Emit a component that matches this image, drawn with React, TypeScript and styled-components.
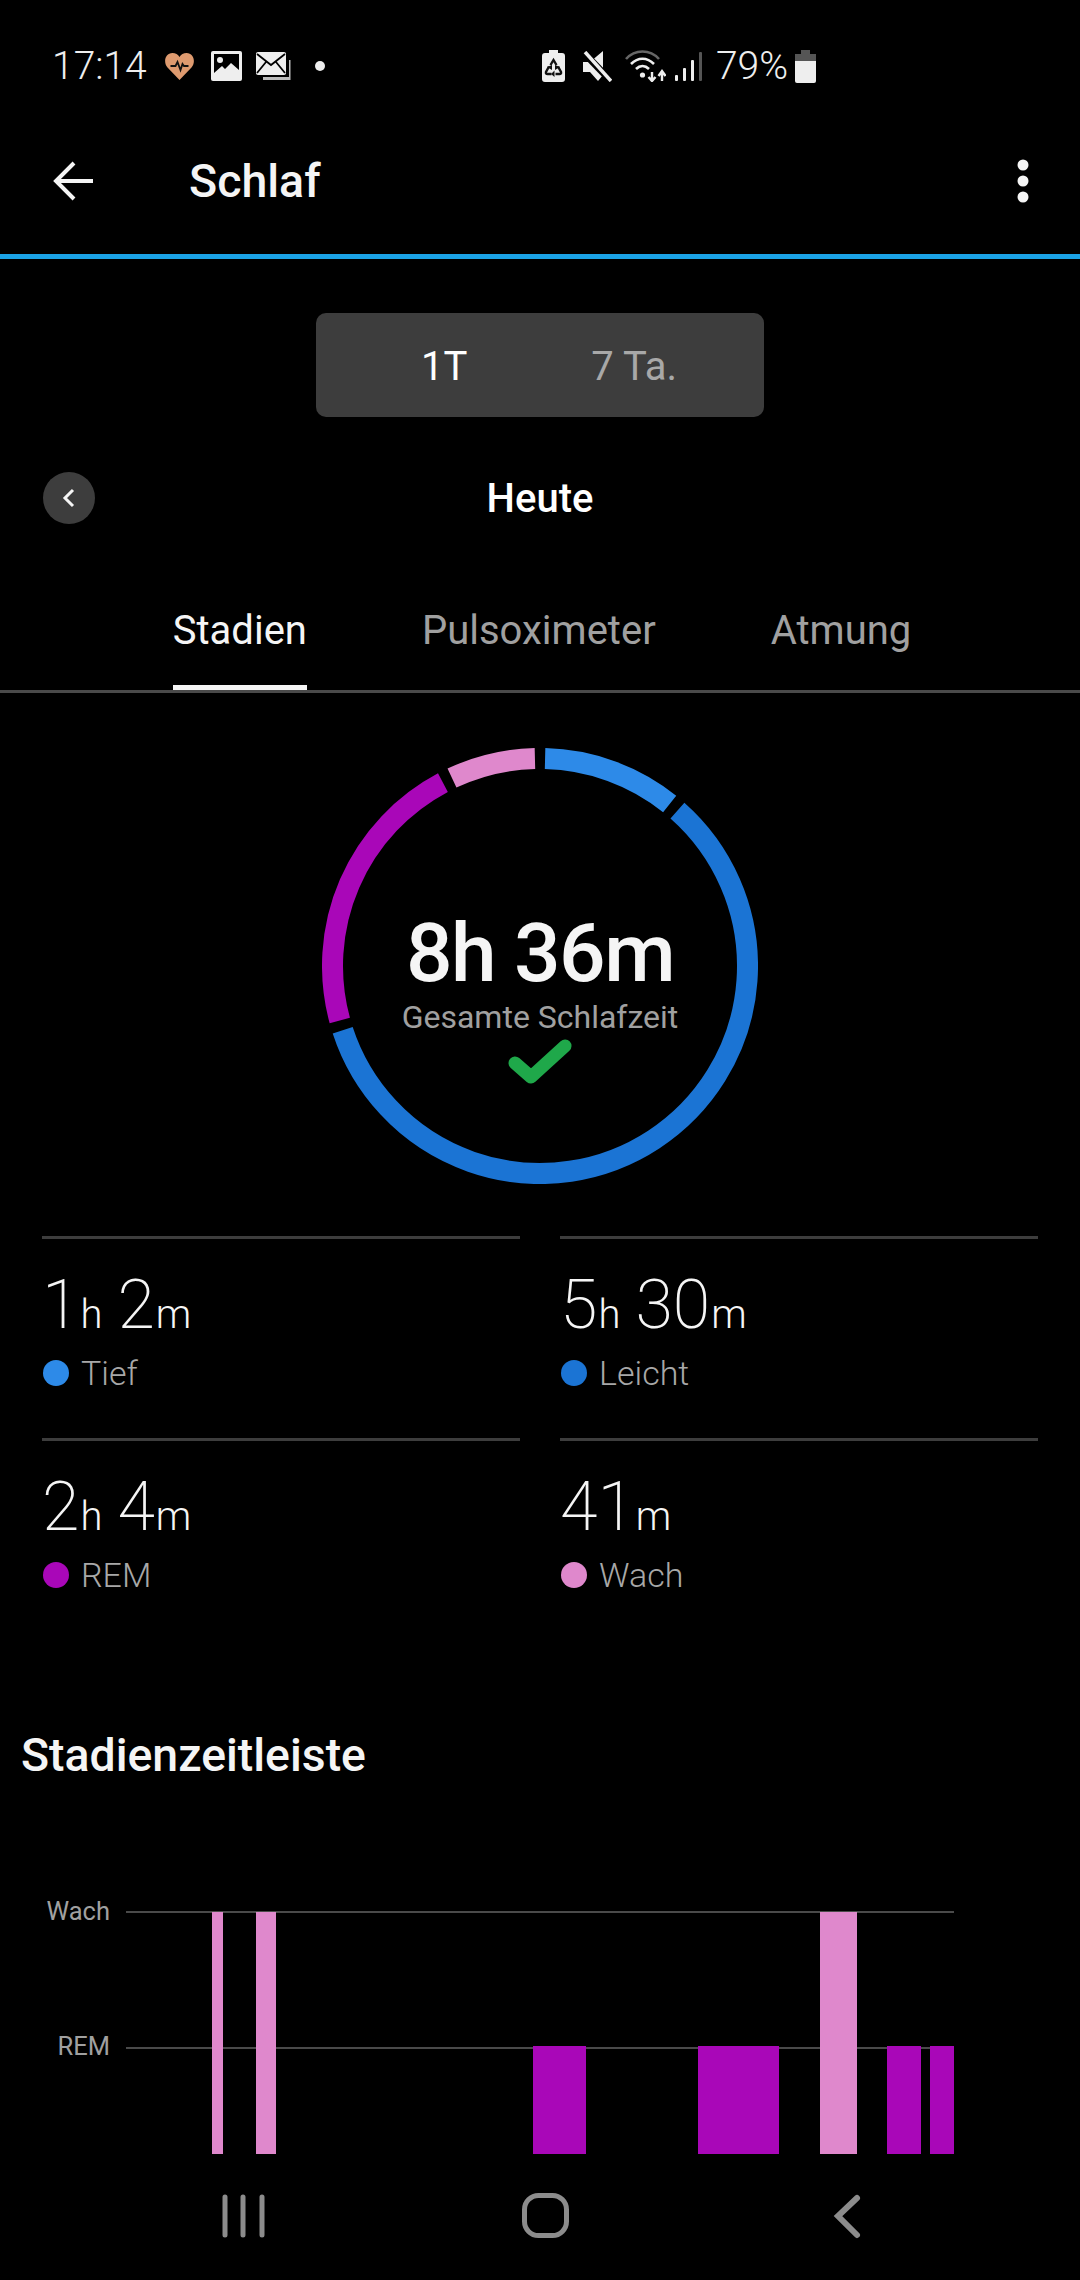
import * as React from "react";
import styled, { createGlobalStyle } from "styled-components";

const GlobalStyle = createGlobalStyle`
    html, body {
        margin: 0;
        padding: 0;
        background: #000;
    }
    * {
        box-sizing: border-box;
    }
`;

const Screen = styled.div`
    width: 1080px;
    height: 2280px;
    background: #000;
    color: #f5f5f5;
    font-family: Roboto, "Liberation Sans", sans-serif;
    display: flex;
    flex-direction: column;
    overflow: hidden;
`;

// Status bar
const StatusBar = styled.div`
    height: 90px;
    flex: none;
    padding: 44px 264px 0 52px;
    display: flex;
    justify-content: space-between;
    align-items: flex-start;
`;

const StatusGroup = styled.div`
    display: flex;
    align-items: center;
    height: 44px;
`;

const StatusText = styled.span<{ $left: number }>`
    font-size: 39px;
    font-weight: 300;
    line-height: 44px;
    color: #eee;
    margin-left: ${(p) => p.$left}px;
`;

const StatusIcon = styled.svg<{ $left: number }>`
    display: block;
    flex: none;
    margin-left: ${(p) => p.$left}px;
`;

function StatusLeft(): JSX.Element {
    return (
        <StatusGroup>
            <StatusText $left={0}>17:14</StatusText>
            <StatusIcon $left={17} width="31" height="28" viewBox="0 0 30 28">
                <path
                    d="M15 28 L3 15.500 C-1.500 10.500 0.500 1 8 1 C11 1 13.500 2.500 15 5 C16.500 2.500 19 1 22 1 C29.500 1 31.500 10.500 27 15.500 Z"
                    fill="#de9a6f"
                />
                <path d="M6 14 H11 L13 10 L16 18 L18 12 L19.500 14 H24" fill="none" stroke="#111" strokeWidth="1.800" />
            </StatusIcon>
            <StatusIcon $left={16} width="31" height="30" viewBox="0 0 31 30">
                <rect width="31" height="30" rx="2" fill="#eee" />
                <rect x="3" y="3" width="25" height="20" fill="#000" />
                <circle cx="9" cy="9" r="3" fill="#eee" />
                <path d="M3 24 L3 22 L11 15 L14 18 L20 12 L28 19 L28 24 Z" fill="#eee" />
            </StatusIcon>
            <StatusIcon $left={14} width="35" height="30" viewBox="0 0 35 30">
                <path d="M33 9 H34.500 V29 H7 V26 H33 Z" fill="#bbb" />
                <rect x="0" y="1" width="30" height="23" rx="2" fill="#eee" />
                <path d="M1 3 L15 14 L29 3 M1 22 L10 11 M29 22 L20 11" fill="none" stroke="#000" strokeWidth="1.800" />
            </StatusIcon>
            <StatusIcon $left={24} width="10" height="10" viewBox="0 0 10 10">
                <circle cx="5" cy="5" r="5" fill="#eee" />
            </StatusIcon>
        </StatusGroup>
    );
}

function StatusRight(): JSX.Element {
    return (
        <StatusGroup>
            <StatusIcon $left={0} width="23" height="32" viewBox="0 0 23 32">
                <path d="M7 0 H16 V3 H20 Q23 3 23 6 V29 Q23 32 20 32 H3 Q0 32 0 29 V6 Q0 3 3 3 H7 Z" fill="#eee" />
                <g fill="none" stroke="#111" strokeWidth="2.400">
                    <path d="M8.500 15 L11.500 10 L14.500 15" />
                    <path d="M16 16.500 L19 22 Q19.500 24 17.500 24 H13.500" />
                    <path d="M7 16.500 L4 22 Q3.500 24 5.500 24 H9.500" />
                </g>
                <path d="M12.500 20.500 V27 L9 24 Z M5 17 L10 15 L10 20 Z M18 17 L13 15 L13 20 Z" fill="#111" />
            </StatusIcon>
            <StatusIcon $left={18} width="29" height="31" viewBox="0 0 29 31">
                <path d="M0 11 H7 L20 0 V24 L15 30 L7 21 H0 Z" fill="#eee" />
                <path d="M0 1 L28 30" stroke="#000" strokeWidth="7" />
                <path d="M2 1 L28 30" stroke="#eee" strokeWidth="3.500" />
            </StatusIcon>
            <StatusIcon $left={13} width="41" height="32" viewBox="0 0 41 32">
                <path d="M1 9 C10 -1 25 -1 34 9" fill="none" stroke="#666" strokeWidth="2.600" />
                <path d="M6 14 C13 7 22 7 29 14" fill="none" stroke="#eee" strokeWidth="2.600" />
                <path d="M11 19 C15 15 20 15 24 19" fill="none" stroke="#eee" strokeWidth="2.600" />
                <circle cx="17.500" cy="25" r="2.600" fill="#eee" />
                <path d="M27 22 V30 M23.500 27 L27 31 L30.500 27 M37 31 V23 M33.500 26 L37 21 L40.500 26" fill="none" stroke="#eee" strokeWidth="2.400" />
            </StatusIcon>
            <StatusIcon $left={9} width="27" height="30" viewBox="0 0 27 30">
                <rect x="0" y="24" width="3" height="6" rx="1" fill="#eee" />
                <rect x="8" y="17" width="3" height="13" rx="1" fill="#eee" />
                <rect x="16" y="9" width="3" height="21" rx="1" fill="#eee" />
                <rect x="24" y="1" width="3" height="29" rx="1" fill="#555" />
            </StatusIcon>
            <StatusText $left={14}>79%</StatusText>
            <StatusIcon $left={7} width="21" height="33" viewBox="0 0 21 33">
                <path d="M6 0 H15 V4 H21 V11 H0 V4 H6 Z" fill="#555" />
                <path d="M0 11 H21 V31 Q21 33 19 33 H2 Q0 33 0 31 Z" fill="#eee" />
            </StatusIcon>
        </StatusGroup>
    );
}

// Top bar
const TopBar = styled.header`
    height: 169px;
    flex: none;
    display: flex;
    align-items: center;
    padding: 18px 51px 0 53px;
    border-bottom: 5px solid #1ba3e6;
`;

const TopBarTitle = styled.h1`
    margin: 0 0 0 94px;
    flex: 1;
    font-size: 46.500px;
    font-weight: 500;
    line-height: 52px;
    color: #f5f5f5;
`;

const RangeSwitch = styled.div`
    width: 448px;
    height: 104px;
    margin: 54px auto 0;
    padding: 4px 0 0 105px;
    background: #3d3d3d;
    border-radius: 10px;
    display: flex;
    align-items: center;
    gap: 124px;
`;

const RangeOption = styled.span<{ $active?: boolean }>`
    font-size: 40px;
    line-height: 44px;
    color: ${(p) => (p.$active ? "#fff" : "#a8a8a8")};
`;

const DateRow = styled.div`
    height: 52px;
    margin-top: 54px;
    padding: 0 0 0 43px;
    display: grid;
    grid-template-columns: 52px 1fr 95px;
    align-items: center;
`;

const RoundButton = styled.div`
    width: 52px;
    height: 52px;
    border-radius: 50%;
    background: #3d3d3d;
    display: flex;
    align-items: center;
    justify-content: center;
`;

const DateLabel = styled.div`
    text-align: center;
    font-size: 40px;
    font-weight: 500;
    line-height: 52px;
    padding-top: 2px;
    color: #fff;
`;

const Tabs = styled.nav`
    height: 171px;
    padding-left: 4px;
    border-bottom: 3px solid #4a4a4a;
    display: flex;
    align-items: flex-end;
    justify-content: center;
    gap: 115px;
`;

const Tab = styled.div<{ $active?: boolean }>`
    height: 82px;
    font-size: 40px;
    line-height: 46px;
    color: ${(p) => (p.$active ? "#f5f5f5" : "#a0a0a0")};
    border-bottom: 5px solid ${(p) => (p.$active ? "#f5f5f5" : "transparent")};
`;

// Sleep ring
const RingWrap = styled.div`
    width: 436px;
    height: 436px;
    margin: 55px auto 0;
    display: grid;
`;

const RingSvg = styled.svg`
    grid-area: 1 / 1;
    display: block;
`;

const RingCenter = styled.div`
    grid-area: 1 / 1;
    display: flex;
    flex-direction: column;
    align-items: center;
    padding-top: 156px;
`;

const RingTotal = styled.div`
    font-size: 82px;
    font-weight: 500;
    letter-spacing: -1.500px;
    line-height: 98px;
    color: #f5f5f5;
`;

const RingCaption = styled.div`
    font-size: 32px;
    line-height: 36px;
    color: #a0a0a0;
    margin-top: -3px;
`;

const RingCheck = styled.svg`
    display: block;
    margin-top: 4px;
`;

interface Stage {
    name: string;
    minutes: number;
    color: string;
    value: [string, string][];
}

const stages: Stage[] = [
    { name: "Tief", minutes: 62, color: "#2d8ae8", value: [["1", "h"], ["2", "m"]] },
    { name: "Leicht", minutes: 330, color: "#1b74d4", value: [["5", "h"], ["30", "m"]] },
    { name: "REM", minutes: 124, color: "#a907b8", value: [["2", "h"], ["4", "m"]] },
    { name: "Wach", minutes: 41, color: "#df88cc", value: [["41", "m"]] },
];

function polar(angle: number, radius: number): string {
    const rad = ((angle - 90) * Math.PI) / 180;
    return `${218 + radius * Math.cos(rad)} ${218 + radius * Math.sin(rad)}`;
}

function SleepRing(): JSX.Element {
    const radius = 207.5;
    const total = stages.reduce((sum, stage) => sum + stage.minutes, 0);
    const gap = 2.8;
    let start = 0;
    return (
        <RingSvg width="436" height="436" viewBox="0 0 436 436">
            {stages.map((stage) => {
                const sweep = (stage.minutes / total) * 360;
                const from = start + gap / 2;
                const to = start + sweep - gap / 2;
                start += sweep;
                return (
                    <path
                        key={stage.name}
                        d={`M ${polar(from, radius)} A ${radius} ${radius} 0 ${to - from > 180 ? 1 : 0} 1 ${polar(to, radius)}`}
                        fill="none"
                        stroke={stage.color}
                        strokeWidth="21"
                    />
                );
            })}
        </RingSvg>
    );
}

// Stage totals
const StatsGrid = styled.div`
    margin-top: 52px;
    padding: 0 42px;
    display: grid;
    grid-template-columns: 478px 478px;
    column-gap: 40px;
`;

const StatCell = styled.div`
    height: 202px;
    border-top: 3px solid #3d3d3d;
    padding-top: 29px;
`;

const StatValue = styled.div`
    height: 74px;
    line-height: 74px;
    font-size: 68px;
    font-weight: 200;
    color: #f5f5f5;
    white-space: nowrap;
`;

const StatUnit = styled.span`
    font-size: 40px;
    font-weight: 350;
    margin: 0 15px 0 1px;
`;

const StatLabel = styled.div`
    display: flex;
    align-items: center;
    gap: 12px;
    margin-top: 10px;
    font-size: 34px;
    font-weight: 300;
    line-height: 42px;
    color: #a8a8a8;
`;

const Dot = styled.span<{ $color: string }>`
    width: 26px;
    height: 26px;
    margin-left: 1px;
    border-radius: 50%;
    background: ${(p) => p.$color};
`;

// Timeline
const SectionTitle = styled.h2`
    margin: 89px 0 0 21px;
    font-size: 46.400px;
    font-weight: 500;
    line-height: 52px;
    color: #f5f5f5;
`;

const Timeline = styled.svg`
    display: block;
    margin-top: 99px;
    flex: none;
`;

const ChartLabel = styled.text`
    font-family: Roboto, "Liberation Sans", sans-serif;
    font-size: 25.500px;
    fill: #a0a0a0;
`;

const timelineBars = [
    { x: 212, width: 11, top: 32, color: "#df88cc" },
    { x: 256, width: 20, top: 32, color: "#df88cc" },
    { x: 533, width: 53, top: 166, color: "#a907b8" },
    { x: 698, width: 81, top: 166, color: "#a907b8" },
    { x: 820, width: 37, top: 32, color: "#df88cc" },
    { x: 887, width: 34, top: 166, color: "#a907b8" },
    { x: 930, width: 24, top: 166, color: "#a907b8" },
];

function StageTimeline(): JSX.Element {
    return (
        <Timeline width="1080" height="274" viewBox="0 0 1080 274">
            <rect x="126" y="31" width="828" height="2" fill="#4a4a4a" />
            <rect x="126" y="167" width="828" height="2" fill="#4a4a4a" />
            <ChartLabel x="110" y="40" textAnchor="end">Wach</ChartLabel>
            <ChartLabel x="110" y="175" textAnchor="end">REM</ChartLabel>
            {timelineBars.map((bar) => (
                <rect key={bar.x} x={bar.x} y={bar.top} width={bar.width} height={274 - bar.top} fill={bar.color} />
            ))}
        </Timeline>
    );
}

// Android nav bar
const NavBar = styled.div`
    height: 126px;
    flex: none;
    margin-top: auto;
    background: #000;
`;

const NavSvg = styled.svg`
    display: block;
`;

function NavButtons(): JSX.Element {
    return (
        <NavSvg width="1080" height="126" viewBox="0 0 1080 126">
            <g fill="none" stroke="#8c8c8c" strokeWidth="5" strokeLinecap="round">
                <path d="M225 43 V81 M243 43 V81 M262 43 V81" />
                <rect x="524.500" y="41.500" width="42" height="40" rx="14" />
                <path d="M857 44 L838 62 L857 81" strokeWidth="6" />
            </g>
        </NavSvg>
    );
}

export default function App(): JSX.Element {
    return (
        <Screen>
            <GlobalStyle />
            <StatusBar>
                <StatusLeft />
                <StatusRight />
            </StatusBar>
            <TopBar>
                <svg width="42" height="42" viewBox="0 0 42 42">
                    <path d="M40 21 H3 M21 3 L3 21 L21 39" fill="none" stroke="#f5f5f5" strokeWidth="4" />
                </svg>
                <TopBarTitle>Schlaf</TopBarTitle>
                <svg width="12" height="44" viewBox="0 0 12 44">
                    <circle cx="6" cy="6" r="5.500" fill="#f5f5f5" />
                    <circle cx="6" cy="22" r="5.500" fill="#f5f5f5" />
                    <circle cx="6" cy="38" r="5.500" fill="#f5f5f5" />
                </svg>
            </TopBar>
            <RangeSwitch>
                <RangeOption $active>1T</RangeOption>
                <RangeOption>7 Ta.</RangeOption>
            </RangeSwitch>
            <DateRow>
                <RoundButton>
                    <svg width="14" height="20" viewBox="0 0 14 20">
                        <path d="M11 2 L3 10 L11 18" fill="none" stroke="#f5f5f5" strokeWidth="3" />
                    </svg>
                </RoundButton>
                <DateLabel>Heute</DateLabel>
            </DateRow>
            <Tabs>
                <Tab $active>Stadien</Tab>
                <Tab>Pulsoximeter</Tab>
                <Tab>Atmung</Tab>
            </Tabs>
            <RingWrap>
                <SleepRing />
                <RingCenter>
                    <RingTotal>8h 36m</RingTotal>
                    <RingCaption>Gesamte Schlafzeit</RingCaption>
                    <RingCheck width="64" height="46" viewBox="0 0 64 46">
                        <path d="M7 24 L23 38 L57 7" fill="none" stroke="#1fa84a" strokeWidth="13" strokeLinejoin="round" strokeLinecap="round" />
                    </RingCheck>
                </RingCenter>
            </RingWrap>
            <StatsGrid>
                {stages.map((stage) => (
                    <StatCell key={stage.name}>
                        <StatValue>
                            {stage.value.map(([number, unit]) => (
                                <React.Fragment key={unit}>
                                    {number}
                                    <StatUnit>{unit}</StatUnit>
                                </React.Fragment>
                            ))}
                        </StatValue>
                        <StatLabel>
                            <Dot $color={stage.color} />
                            {stage.name}
                        </StatLabel>
                    </StatCell>
                ))}
            </StatsGrid>
            <SectionTitle>Stadienzeitleiste</SectionTitle>
            <StageTimeline />
            <NavBar>
                <NavButtons />
            </NavBar>
        </Screen>
    );
}
